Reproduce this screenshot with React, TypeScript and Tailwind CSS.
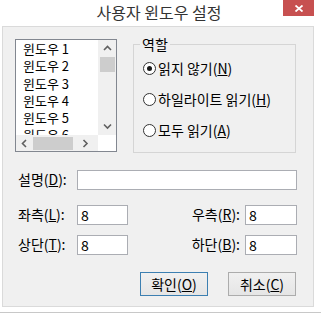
import { useState } from 'react';

const FONT = '"Noto Sans CJK KR", "Noto Sans", sans-serif';

const items = ['윈도우 1', '윈도우 2', '윈도우 3', '윈도우 4', '윈도우 5', '윈도우 6'];

function Chevron({ dir }: { dir: 'up' | 'down' | 'left' | 'right' }) {
  const paths: Record<string, string> = {
    up: 'M1 5 L4.5 1.5 L8 5',
    down: 'M1 1.5 L4.5 5 L8 1.5',
    left: 'M5 1 L1.5 4.5 L5 8',
    right: 'M1.5 1 L5 4.5 L1.5 8',
  };
  const vertical = dir === 'up' || dir === 'down';
  return (
    <svg
      width={vertical ? 9 : 7}
      height={vertical ? 7 : 9}
      viewBox={vertical ? '0 0 9 7' : '0 0 7 9'}
      fill="none"
      stroke="#606060"
      strokeWidth={1.6}
    >
      <path d={paths[dir]} />
    </svg>
  );
}

function Mn({ children }: { children: string }) {
  return <span className="underline underline-offset-[1px]">{children}</span>;
}

function Radio({ checked, onClick, children }: { checked: boolean; onClick: () => void; children: React.ReactNode }) {
  return (
    <button onClick={onClick} className="flex items-center h-[16px] gap-[2px] text-left">
      <span className="w-[13px] h-[13px] rounded-full border border-[#333] bg-white flex items-center justify-center">
        {checked && <span className="w-[5px] h-[5px] rounded-full bg-[#1a1a1a]" />}
      </span>
      <span className="text-[14px] leading-[16px] text-black">{children}</span>
    </button>
  );
}

function Field({ value, width }: { value: string; width: string }) {
  return (
    <input
      defaultValue={value}
      className={`${width} h-[20px] border border-[#abadb3] bg-white px-[3px] text-[14px] leading-[18px] text-black outline-none`}
      style={{ fontFamily: FONT }}
    />
  );
}

export default function App() {
  const [mode, setMode] = useState(0);

  return (
    <div className="w-[321px] h-[314px] bg-white overflow-hidden" style={{ fontFamily: FONT }}>
      {/* Title bar */}
      <div className="relative h-[26px] flex items-center justify-center">
        <span className="text-[16px] leading-[20px] text-[#333] -mt-[3px] -ml-[3px]">사용자 윈도우 설정</span>
        <button className="absolute top-0 left-[283px] w-[31px] h-[16px] bg-[#c75050] flex items-center justify-center">
          <svg width="8" height="7" viewBox="0 0 8 7" stroke="white" strokeWidth={1.8}>
            <path d="M0.5 0.5 L7.5 6.5 M7.5 0.5 L0.5 6.5" />
          </svg>
        </button>
      </div>

      {/* Client area */}
      <div className="ml-[2px] w-[312px] h-[281px] border border-[#dadada] bg-[#f0f0f0]">
        <div className="flex pt-[12px] pl-[12px]">
          {/* List box */}
          <div className="w-[102px] h-[113px] border border-[#828790] bg-white flex flex-col">
            <div className="flex h-[95px]">
              <div className="w-[82px] overflow-hidden pl-[7px]">
                {items.map((it) => (
                  <div key={it} className="text-[13px] leading-[17.3px] text-black whitespace-nowrap">
                    {it}
                  </div>
                ))}
              </div>
              <div className="w-[18px] bg-[#f0f0f0] flex flex-col items-center">
                <div className="h-[17px] flex items-center justify-center">
                  <Chevron dir="up" />
                </div>
                <div className="w-[15px] h-[15px] bg-[#cdcdcd]" />
                <div className="flex-1" />
                <div className="h-[17px] flex items-center justify-center">
                  <Chevron dir="down" />
                </div>
              </div>
            </div>
            <div className="flex h-[16px]">
              <div className="w-[82px] bg-[#f0f0f0] flex items-center">
                <div className="w-[17px] flex justify-center">
                  <Chevron dir="left" />
                </div>
                <div className="w-[40px] h-[13px] bg-[#cdcdcd]" />
                <div className="flex-1 flex justify-center">
                  <Chevron dir="right" />
                </div>
              </div>
              <div className="w-[18px] bg-white" />
            </div>
          </div>

          {/* Role group */}
          <div className="relative ml-[16px] mt-[5px] w-[163px] h-[109px] border border-[#d5d5d5]">
            <span className="absolute -top-[10px] left-[6px] px-[2px] bg-[#f0f0f0] text-[14px] leading-[18px] text-black">
              역할
            </span>
            <div className="flex flex-col gap-[15px] pt-[15px] pl-[9px]">
              <Radio checked={mode === 0} onClick={() => setMode(0)}>
                읽지 않기(<Mn>N</Mn>)
              </Radio>
              <Radio checked={mode === 1} onClick={() => setMode(1)}>
                하일라이트 읽기(<Mn>H</Mn>)
              </Radio>
              <Radio checked={mode === 2} onClick={() => setMode(2)}>
                모두 읽기(<Mn>A</Mn>)
              </Radio>
            </div>
          </div>
        </div>

        {/* Description */}
        <div className="flex items-center mt-[16px] pl-[15px] text-[14px] text-black">
          <span className="w-[59px]">
            설명(<Mn>D</Mn>):
          </span>
          <Field value="" width="w-[220px]" />
        </div>

        {/* Margins */}
        <div className="flex items-center mt-[14px] pl-[15px] pr-[16px] text-[14px] text-black">
          <span className="w-[59px]">
            좌측(<Mn>L</Mn>):
          </span>
          <Field value="8" width="w-[51px]" />
          <span className="flex-1 text-right pr-[5px]">
            우측(<Mn>R</Mn>):
          </span>
          <Field value="8" width="w-[52px]" />
        </div>
        <div className="flex items-center mt-[9px] pl-[15px] pr-[16px] text-[14px] text-black">
          <span className="w-[59px]">
            상단(<Mn>T</Mn>):
          </span>
          <Field value="8" width="w-[51px]" />
          <span className="flex-1 text-right pr-[5px]">
            하단(<Mn>B</Mn>):
          </span>
          <Field value="8" width="w-[52px]" />
        </div>

        {/* Buttons */}
        <div className="flex justify-end gap-[20px] mt-[17px] pr-[17px]">
          <button className="w-[68px] h-[24px] border border-[#3c7fb1] bg-gradient-to-b from-[#f0f0f0] to-[#e5e5e5] text-[14px] text-black">
            확인(<Mn>O</Mn>)
          </button>
          <button className="w-[68px] h-[24px] border border-[#acacac] bg-gradient-to-b from-[#f0f0f0] to-[#e5e5e5] text-[14px] text-black">
            취소(<Mn>C</Mn>)
          </button>
        </div>
      </div>

      <div className="mt-[5px] h-px w-full bg-[#c8c8c8]" />
    </div>
  );
}
